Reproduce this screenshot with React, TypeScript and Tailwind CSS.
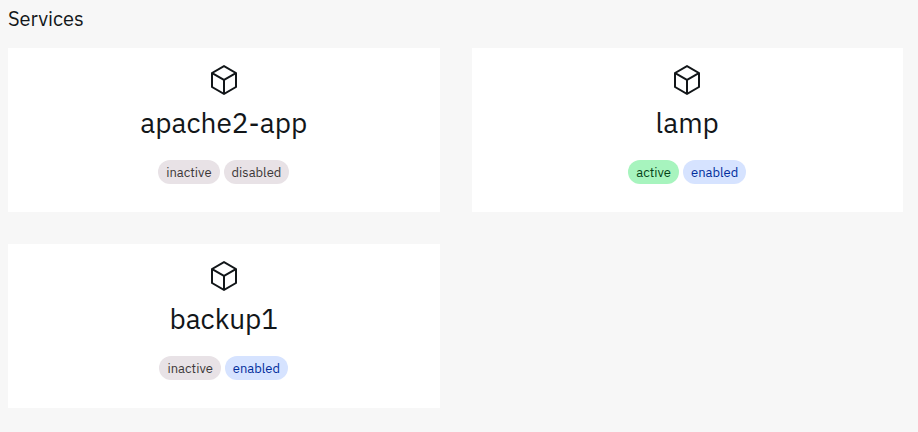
interface Service {
  name: string;
  active: boolean;
  enabled: boolean;
}

const services: Service[] = [
  { name: 'apache2-app', active: false, enabled: false },
  { name: 'lamp', active: true, enabled: true },
  { name: 'backup1', active: false, enabled: true },
];

function CubeIcon() {
  return (
    <svg className="w-8 h-8" viewBox="0 0 32 32" fill="currentColor" aria-hidden="true">
      <path d="M28.5039,8.1362l-12-7a1,1,0,0,0-1.0078,0l-12,7A1,1,0,0,0,3,9V23a1,1,0,0,0,.4961.8638l12,7a1,1,0,0,0,1.0078,0l12-7A1,1,0,0,0,29,23V9A1,1,0,0,0,28.5039,8.1362ZM16,3.1577,26.0156,9,16,14.8423,5.9844,9ZM5,10.7412l10,5.833V28.2588L5,22.4258Zm12,17.5176V16.5742l10-5.833V22.4258Z" />
    </svg>
  );
}

function Tag({ label, color }: { label: string; color: string }) {
  return (
    <span className={`px-2 pt-0.5 rounded-full text-[13px] leading-[22px] ${color}`}>
      {label}
    </span>
  );
}

function ServiceCard({ service }: { service: Service }) {
  return (
    <div className="bg-white pt-4 pb-7 px-4 flex flex-col items-center">
      <CubeIcon />
      <h2 className="mt-2 mb-[18px] text-[28px] leading-[38px]">{service.name}</h2>
      <div className="flex gap-1">
        <Tag
          label={service.active ? 'active' : 'inactive'}
          color={service.active ? 'bg-[#a7f4be] text-[#044317]' : 'bg-[#e8e2e6] text-[#3c3838]'}
        />
        <Tag
          label={service.enabled ? 'enabled' : 'disabled'}
          color={service.enabled ? 'bg-[#d6e3ff] text-[#002d9c]' : 'bg-[#e8e2e6] text-[#3c3838]'}
        />
      </div>
    </div>
  );
}

export default function App() {
  return (
    <main className="min-h-screen bg-[#f7f7f7] text-[#121619] pt-1.5 pb-6 pl-2 pr-[15px] font-['IBM_Plex_Sans','Noto_Sans',sans-serif]">
      <h1 className="mb-4 text-xl leading-[26px]">Services</h1>
      <div className="grid grid-cols-2 gap-8">
        {services.map((service) => (
          <ServiceCard key={service.name} service={service} />
        ))}
      </div>
    </main>
  );
}
